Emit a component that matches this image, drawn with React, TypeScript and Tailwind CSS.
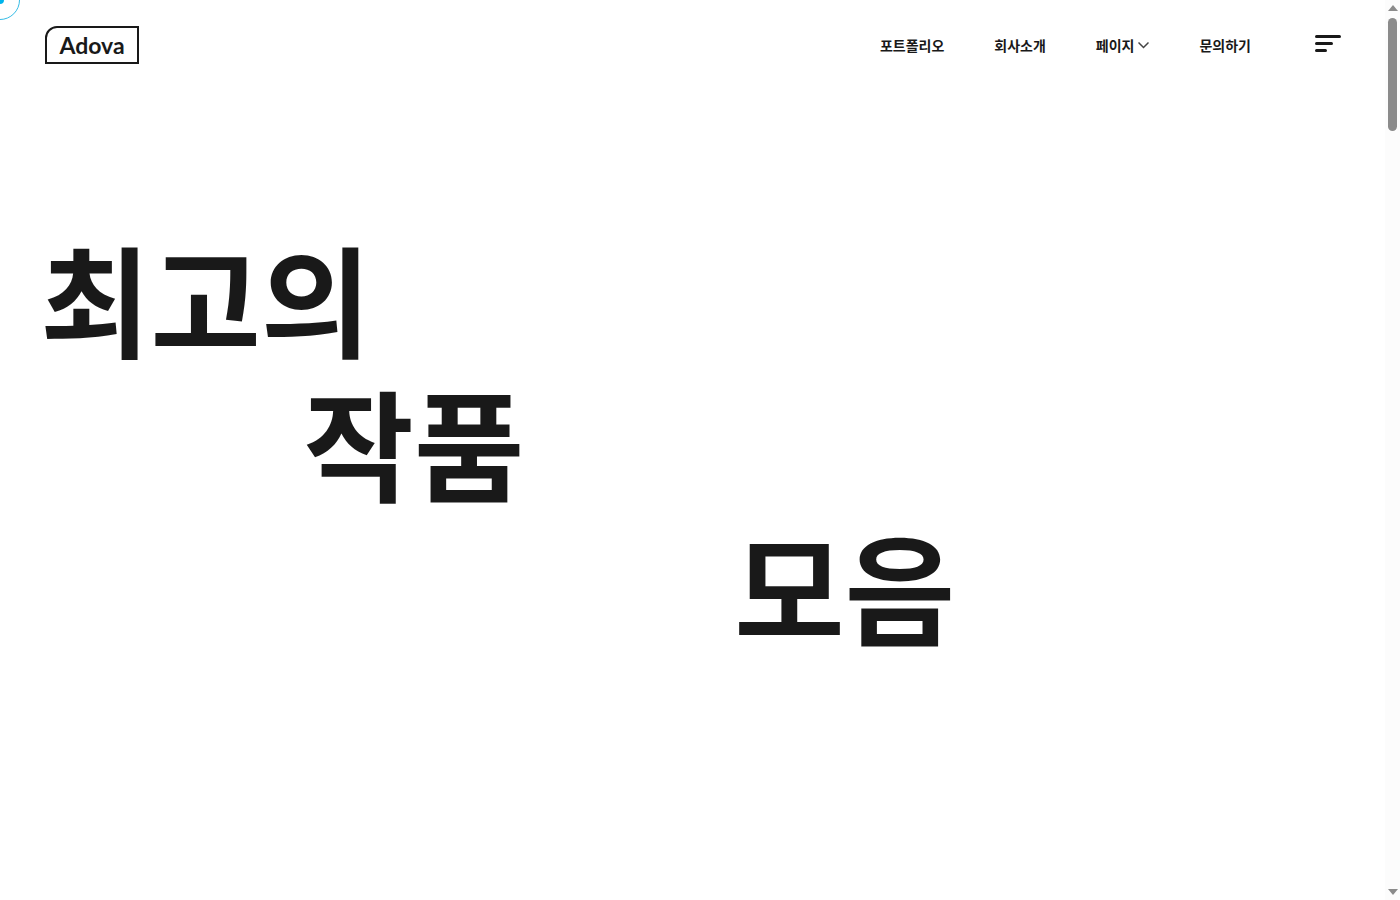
import { useState } from 'react';

const navItems = [
  { label: '포트폴리오', href: '#portfolio' },
  { label: '회사소개', href: '#about' },
  { label: '페이지', href: '#pages', hasMenu: true },
  { label: '문의하기', href: '#contact' }
];

function Logo() {
  return (
    <a
      href="#home"
      className="flex h-[38px] w-[94px] items-center justify-center rounded-tl-[12px] border-2 border-[#191919] font-['Lato',sans-serif] text-[23px] leading-8 font-bold"
    >
      Adova
    </a>
  );
}

function Header() {
  const [open, setOpen] = useState(false);

  return (
    <header className="flex items-center justify-between pt-[26px] pr-11 pl-[45px]">
      <Logo />
      <div className="flex items-center">
        <nav className="flex items-center gap-[50px] text-[14px] leading-5 font-bold">
          {navItems.map((item) => (
            <a key={item.href} href={item.href} className="flex items-center gap-1">
              {item.label}
              {item.hasMenu && (
                <svg className="h-3 w-[11px]" viewBox="0 0 11 12" fill="none" aria-hidden="true">
                  <path d="M0.5 3.5L5.5 8.5L10.5 3.5" stroke="#444" strokeWidth="1.5" />
                </svg>
              )}
            </a>
          ))}
        </nav>
        <button
          type="button"
          aria-label="메뉴"
          aria-expanded={open}
          onClick={() => setOpen(!open)}
          className="ml-16 flex h-5 w-[26px] flex-col items-start gap-1"
        >
          <span className="h-[3px] w-[26px] rounded-full bg-[#191919]" />
          <span className="h-[3px] w-[18px] rounded-full bg-[#191919]" />
          <span className="h-[3px] w-3 rounded-full bg-[#191919]" />
        </button>
      </div>
    </header>
  );
}

function ScrollTrack() {
  return (
    <div className="flex w-[15px] shrink-0 flex-col items-center justify-between bg-[#fcfcfc] py-[5px]" aria-hidden="true">
      <div className="flex flex-col items-center gap-[7px]">
        <svg className="h-[6px] w-[10px]" viewBox="0 0 10 6">
          <path d="M5 0L10 6H0Z" fill="#8b8b8b" />
        </svg>
        <div className="h-[113px] w-[9px] rounded-full bg-[#8b8b8b]" />
      </div>
      <svg className="h-[6px] w-[10px]" viewBox="0 0 10 6">
        <path d="M0 0H10L5 6Z" fill="#8b8b8b" />
      </svg>
    </div>
  );
}

function Cursor() {
  return (
    <div className="pointer-events-none absolute -top-5 -left-5 flex h-10 w-10 items-center justify-center rounded-full border border-[#35bce6]">
      <div className="h-2 w-2 rounded-full bg-[#00b4ec]" />
    </div>
  );
}

export default function App() {
  return (
    <div className="relative flex h-screen overflow-hidden bg-white font-['Noto_Sans_CJK_KR',sans-serif] text-[#191919]">
      <Cursor />
      <div className="min-w-0 flex-1">
        <Header />
        <main className="px-10 pt-[161px]">
          <h1 className="text-[120px] leading-[144px] font-bold">
            <span className="block">최고의</span>
            <span className="block pl-[20.2%]">작품</span>
            <span className="block pl-[53.2%]">모음</span>
          </h1>
        </main>
      </div>
      <ScrollTrack />
    </div>
  );
}
